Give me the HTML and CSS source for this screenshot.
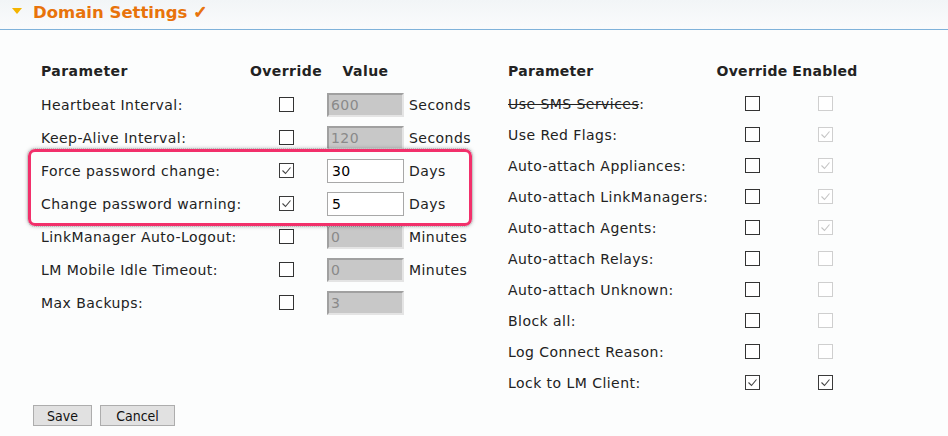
FILE: index.html
```html
<!DOCTYPE html>
<html>
<head>
<meta charset="utf-8">
<link rel="stylesheet" href="styles.css">
</head>
<body>
<div class="header">
  <span class="tri"></span>
  <h1 class="title">Domain Settings <span class="tick">✓</span></h1>
</div>
<div class="content">
  <div class="tables">
    <div class="tbl left">
      <div class="row head"><div>Parameter</div><div class="c">Override</div><div class="c">Value</div><div></div></div>
      <div class="row"><div>Heartbeat Interval:</div><div class="c"><span class="cb"></span></div><div><span class="inp dis">600</span></div><div>Seconds</div></div>
      <div class="row"><div>Keep-Alive Interval:</div><div class="c"><span class="cb"></span></div><div><span class="inp dis">120</span></div><div>Seconds</div></div>
      <div class="hl">
        <div class="row"><div>Force password change:</div><div class="c"><span class="cb on"><svg viewBox="0 0 15 15"><path d="M3.5 7.5 L6.5 10.5 L11.5 4.5"/></svg></span></div><div><span class="inp">30</span></div><div>Days</div></div>
        <div class="row"><div>Change password warning:</div><div class="c"><span class="cb on"><svg viewBox="0 0 15 15"><path d="M3.5 7.5 L6.5 10.5 L11.5 4.5"/></svg></span></div><div><span class="inp">5</span></div><div>Days</div></div>
      </div>
      <div class="row"><div>LinkManager Auto-Logout:</div><div class="c"><span class="cb"></span></div><div><span class="inp dis">0</span></div><div>Minutes</div></div>
      <div class="row"><div>LM Mobile Idle Timeout:</div><div class="c"><span class="cb"></span></div><div><span class="inp dis">0</span></div><div>Minutes</div></div>
      <div class="row"><div>Max Backups:</div><div class="c"><span class="cb"></span></div><div><span class="inp dis">3</span></div><div></div></div>
    </div>
    <div class="tbl right">
      <div class="row head"><div>Parameter</div><div class="c">Override</div><div class="c">Enabled</div></div>
      <div class="row"><div><s>Use SMS Services</s>:</div><div class="c"><span class="cb"></span></div><div class="c"><span class="cb dis"></span></div></div>
      <div class="row"><div>Use Red Flags:</div><div class="c"><span class="cb"></span></div><div class="c"><span class="cb dis on"><svg viewBox="0 0 15 15"><path d="M3.5 7.5 L6.5 10.5 L11.5 4.5"/></svg></span></div></div>
      <div class="row"><div>Auto-attach Appliances:</div><div class="c"><span class="cb"></span></div><div class="c"><span class="cb dis on"><svg viewBox="0 0 15 15"><path d="M3.5 7.5 L6.5 10.5 L11.5 4.5"/></svg></span></div></div>
      <div class="row"><div>Auto-attach LinkManagers:</div><div class="c"><span class="cb"></span></div><div class="c"><span class="cb dis on"><svg viewBox="0 0 15 15"><path d="M3.5 7.5 L6.5 10.5 L11.5 4.5"/></svg></span></div></div>
      <div class="row"><div>Auto-attach Agents:</div><div class="c"><span class="cb"></span></div><div class="c"><span class="cb dis on"><svg viewBox="0 0 15 15"><path d="M3.5 7.5 L6.5 10.5 L11.5 4.5"/></svg></span></div></div>
      <div class="row"><div>Auto-attach Relays:</div><div class="c"><span class="cb"></span></div><div class="c"><span class="cb dis"></span></div></div>
      <div class="row"><div>Auto-attach Unknown:</div><div class="c"><span class="cb"></span></div><div class="c"><span class="cb dis"></span></div></div>
      <div class="row"><div>Block all:</div><div class="c"><span class="cb"></span></div><div class="c"><span class="cb dis"></span></div></div>
      <div class="row"><div>Log Connect Reason:</div><div class="c"><span class="cb"></span></div><div class="c"><span class="cb dis"></span></div></div>
      <div class="row"><div>Lock to LM Client:</div><div class="c"><span class="cb on"><svg viewBox="0 0 15 15"><path d="M3.5 7.5 L6.5 10.5 L11.5 4.5"/></svg></span></div><div class="c"><span class="cb on"><svg viewBox="0 0 15 15"><path d="M3.5 7.5 L6.5 10.5 L11.5 4.5"/></svg></span></div></div>
    </div>
  </div>
  <div class="buttons">
    <button class="btn save">Save</button>
    <button class="btn cancel">Cancel</button>
  </div>
</div>
</body>
</html>
```
FILE: styles.css
```css
html, body {
  margin: 0;
  padding: 0;
  background: #fcfdfd;
  font-family: "DejaVu Sans", Verdana, sans-serif;
  font-size: 14px;
  letter-spacing: 0.45px;
  color: #222;
}
.header {
  height: 29px;
  border-bottom: 1px solid #7fb2da;
  background: linear-gradient(#f2f5f7, #fafbfc);
  display: flex;
  align-items: center;
  padding-left: 12px;
}
.tri {
  width: 0;
  height: 0;
  border-left: 5px solid transparent;
  border-right: 5px solid transparent;
  border-top: 6px solid #f4b400;
  margin-right: 11px;
  margin-top: -8px;
}
.title {
  margin: 0;
  margin-top: -6px;
  font-size: 16.5px;
  letter-spacing: 0;
  font-weight: bold;
  color: #e8730b;
}
.tick {
  font-size: 17px;
  -webkit-text-stroke: 1px #e8730b;
}
.content {
  padding: 25px 0 0 41px;
}
.tables {
  display: flex;
}
.tbl.left { width: 418px; margin-right: 49px; }
.row {
  display: grid;
  align-items: center;
  height: 33px;
}
.left .row { grid-template-columns: 204px 82px 77px auto; }
.left .row > div:nth-child(4) { padding-left: 5px; white-space: nowrap; }
.right .row { grid-template-columns: 206px 76px 70px; height: 31px; }
.row.head { height: 33px; font-weight: bold; padding-bottom: 2px; box-sizing: border-box; }
.right .row.head { letter-spacing: 0.3px; }
.c { display: flex; justify-content: center; }
.hl {
  margin: -5px -13px -6px;
  padding: 2px 10px 3px;
  border: 3px solid #f2306b;
  border-radius: 7px;
  box-shadow: 0 0 4px rgba(0,0,0,0.35);
  outline: 1px dotted #b8b8b8;
  position: relative;
}
.cb {
  width: 15px;
  height: 15px;
  box-sizing: border-box;
  border: 1px solid #333;
  background: #fff;
  display: inline-block;
  position: relative;
}
.cb.on { border-color: #3a3a3a; }
.cb svg {
  position: absolute;
  left: -1px;
  top: -1px;
  width: 15px;
  height: 15px;
  fill: none;
  stroke: #444;
  stroke-width: 1.1;
}
.cb.dis {
  border-color: #cfcfcf;
}
.cb.dis svg { stroke: #c4c4c4; }
.inp {
  display: block;
  width: 77px;
  height: 24px;
  box-sizing: border-box;
  border: 1px solid #a8a8a8;
  background: #fff;
  color: #000;
  padding-left: 4px;
  line-height: 22px;
}
.inp.dis {
  background: #c8c8c8;
  color: #8a8a8a;
  border: 2px solid;
  border-color: #a0a0a0 #e4e4e4 #e4e4e4 #a0a0a0;
  padding-left: 2px;
  line-height: 20px;
}
s { text-decoration-thickness: 1px; }
.buttons {
  display: flex;
  gap: 8px;
  margin-top: 7px;
  margin-left: -8px;
}
.btn {
  font-family: "DejaVu Sans Condensed", "DejaVu Sans", sans-serif;
  font-size: 14px;
  letter-spacing: 0;
  height: 21px;
  background: #e1e1e1;
  border: 1px solid #adadad;
  color: #111;
  padding: 0;
  border-radius: 0;
}
.btn.save { width: 59px; }
.btn.cancel { width: 75px; }
```
